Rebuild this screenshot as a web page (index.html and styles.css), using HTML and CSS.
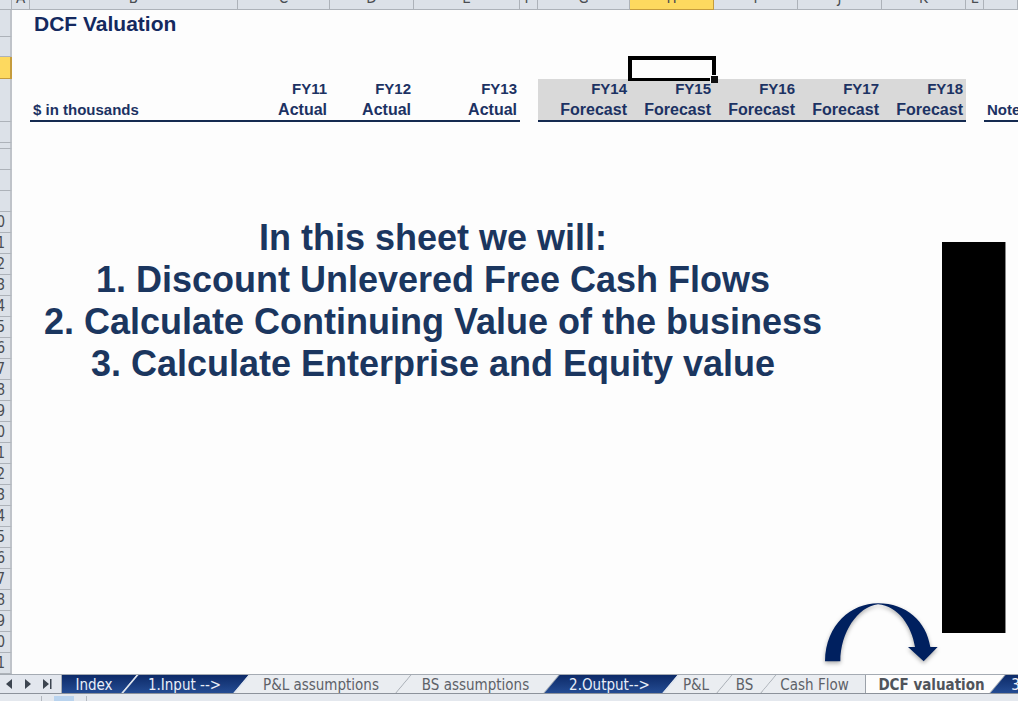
FILE: index.html
```html
<!DOCTYPE html>
<html lang="en">
<head>
<meta charset="utf-8">
<title>DCF Valuation</title>
<link rel="stylesheet" href="styles.css">
</head>
<body>
<div class="app">
<main class="sheet">
<table class="grid">
<colgroup><col class="c-head"><col class="c-thin"><col class="c-label"><col class="c-wide"><col class="c-year"><col class="c-last"><col class="c-thin"><col class="c-wide"><col class="c-year"><col class="c-year"><col class="c-year"><col class="c-year"><col class="c-thin"><col></colgroup>
<thead>
<tr class="letters"><th></th><th><span>A</span></th><th><span>B</span></th><th><span>C</span></th><th><span>D</span></th><th><span>E</span></th><th><span>F</span></th><th><span>G</span></th><th class="picked"><span>H</span></th><th><span>I</span></th><th><span>J</span></th><th><span>K</span></th><th><span>L</span></th><th></th></tr>
</thead>
<tbody>
<tr class="r-title"><th></th><td></td><td colspan="12"><h1>DCF Valuation</h1></td></tr>
<tr class="r-gap"><th></th><td colspan="13"></td></tr>
<tr class="r-active"><th class="picked"></th><td colspan="7"></td><td class="active"><div class="cursor"></div></td><td colspan="5"></td></tr>
<tr class="r-years"><th></th><td></td><td class="line label">$ in thousands</td><td class="line"><b>FY11</b>Actual</td><td class="line"><b>FY12</b>Actual</td><td class="line"><b>FY13</b>Actual</td><td></td><td class="line plan"><b>FY14</b>Forecast</td><td class="line plan"><b>FY15</b>Forecast</td><td class="line plan"><b>FY16</b>Forecast</td><td class="line plan"><b>FY17</b>Forecast</td><td class="line plan"><b>FY18</b>Forecast</td><td></td><td class="line label">Notes</td></tr>
<tr class="row"><th></th><td colspan="13"></td></tr>
<tr class="r-slim"><th></th><td colspan="13"></td></tr>
<tr class="row"><th></th><td colspan="13"></td></tr>
<tr class="row"><th></th><td colspan="13"></td></tr>
<tr class="row"><th></th><td colspan="13"></td></tr>
<tr class="row"><th><span>10</span></th><td colspan="13"></td></tr>
<tr class="row"><th><span>11</span></th><td colspan="13"></td></tr>
<tr class="row"><th><span>12</span></th><td colspan="13"></td></tr>
<tr class="row"><th><span>13</span></th><td colspan="13"></td></tr>
<tr class="row"><th><span>14</span></th><td colspan="13"></td></tr>
<tr class="row"><th><span>15</span></th><td colspan="13"></td></tr>
<tr class="row"><th><span>16</span></th><td colspan="13"></td></tr>
<tr class="row"><th><span>17</span></th><td colspan="13"></td></tr>
<tr class="row"><th><span>18</span></th><td colspan="13"></td></tr>
<tr class="row"><th><span>19</span></th><td colspan="13"></td></tr>
<tr class="row"><th><span>20</span></th><td colspan="13"></td></tr>
<tr class="row"><th><span>21</span></th><td colspan="13"></td></tr>
<tr class="row"><th><span>22</span></th><td colspan="13"></td></tr>
<tr class="row"><th><span>23</span></th><td colspan="13"></td></tr>
<tr class="row"><th><span>24</span></th><td colspan="13"></td></tr>
<tr class="row"><th><span>25</span></th><td colspan="13"></td></tr>
<tr class="row"><th><span>26</span></th><td colspan="13"></td></tr>
<tr class="row"><th><span>27</span></th><td colspan="13"></td></tr>
<tr class="row"><th><span>28</span></th><td colspan="13"></td></tr>
<tr class="row"><th><span>29</span></th><td colspan="13"></td></tr>
<tr class="row"><th><span>30</span></th><td colspan="13"></td></tr>
<tr class="row"><th><span>31</span></th><td colspan="13"></td></tr>
</tbody>
</table>
<div class="note">
<p>In this sheet we will:</p>
<p>1. Discount Unlevered Free Cash Flows</p>
<p>2. Calculate Continuing Value of the business</p>
<p>3. Calculate Enterprise and Equity value</p>
</div>
<div class="block"></div>
<svg class="arrow" viewBox="0 0 351 192" aria-hidden="true"><path d="M6 178C8 66 86 4 165 4C250 4 310 58 322 135H344L302 178L255 135H276C266 72 226 12 165 7C104 14 52 92 52 178Z"/></svg>
</main>
<nav class="tabs" aria-label="Sheets">
<div class="scroll">
<button class="step" aria-label="Previous sheet"><svg viewBox="0 0 10 10"><path d="M8 0V10L2 5Z"/></svg></button>
<button class="step" aria-label="Next sheet"><svg viewBox="0 0 10 10"><path d="M2 0V10L8 5Z"/></svg></button>
<button class="step" aria-label="Last sheet"><svg viewBox="0 0 10 10"><path d="M1 0V10L7 5ZM8 0H9.500V10H8Z"/></svg></button>
</div>
<button class="tab dark t-index"><span>Index</span></button>
<button class="tab dark t-input"><span>1.Input --&gt;</span></button>
<button class="tab t-pla"><span>P&amp;L assumptions</span></button>
<button class="tab t-bsa"><span>BS assumptions</span></button>
<button class="tab dark t-output"><span>2.Output--&gt;</span></button>
<button class="tab t-pl"><span>P&amp;L</span></button>
<button class="tab t-bs"><span>BS</span></button>
<button class="tab t-cash"><span>Cash Flow</span></button>
<button class="tab current t-dcf" aria-current="page"><span>DCF valuation</span></button>
<button class="tab dark t-next"><span>3</span></button>
</nav>
<footer class="status"><i></i><em></em><i></i></footer>
</div>
</body>
</html>
```
FILE: styles.css
```css
* { box-sizing: border-box; }
body {
  margin: 0;
  background: #fdfdfd;
  color: #1b365f;
  font-family: "Liberation Sans", Arial, sans-serif;
}
.app {
  display: flex;
  flex-direction: column;
  min-height: 100vh;
  overflow: hidden;
}
.sheet {
  position: relative;
  flex: 1 0 auto;
  overflow: hidden;
}

/* cell grid */
.grid {
  width: 100%;
  table-layout: fixed;
  border-collapse: separate;
  border-spacing: 0;
}
.c-head { width: 12px; }
.c-thin { width: 18px; }
.c-label { width: 208px; }
.c-wide { width: 92px; }
.c-year { width: 84px; }
.c-last { width: 106px; }
.grid td, .grid th { padding: 0; }
.grid th {
  background: #dce1e8;
  border-right: 1px solid #adb2b9;
  border-bottom: 1px solid #adb2b9;
  color: #4a4d52;
  font: 15px/20px "DejaVu Sans Condensed", "DejaVu Sans", sans-serif;
}
.grid tbody th { border-right-width: 2px; border-right-color: #bfc3c9; }
.grid th.picked {
  background: #fdd95f;
  border-color: #c59c3d;
}
.letters span {
  display: flex;
  align-items: flex-end;
  justify-content: center;
  height: 9px;
  padding-bottom: 1px;
  overflow: hidden;
}
.row span {
  display: flex;
  justify-content: flex-end;
  height: 20px;
  padding-right: 5px;
  overflow: hidden;
}
.letters { height: 10px; }
.r-title { height: 27px; }
.r-gap { height: 20px; }
.r-active { height: 22px; }
.r-years { height: 43px; }
.r-slim { height: 6px; }
.row { height: 21px; }
h1 {
  margin: 0;
  padding-left: 4px;
  color: #14295f;
  font-size: 21px;
  line-height: 26px;
}
.r-years td {
  padding-right: 3px;
  color: #1c3263;
  font-size: 16px;
  font-weight: bold;
  line-height: 21px;
  text-align: right;
  vertical-align: top;
  white-space: nowrap;
}
.r-years b {
  display: block;
  height: 20px;
  font-size: 15px;
  line-height: 20px;
}
.r-years .line { border-bottom: 2px solid #152a50; }
.r-years .label {
  padding-left: 3px;
  font-size: 15px;
  text-align: left;
  vertical-align: bottom;
  overflow: hidden;
}
.r-years .plan { background: #d9d9d9; }
.active { position: relative; }
.cursor {
  position: absolute;
  inset: -1px -2px -2px -2px;
  border: 4px solid #000;
  border-bottom-width: 3px;
}
.cursor::after {
  content: "";
  position: absolute;
  right: -6px;
  bottom: -5px;
  width: 7px;
  height: 7px;
  background: #111;
  border-top: 1px solid #fff;
  border-left: 1px solid #fff;
}

/* drawings lying over the cells */
.note {
  position: absolute;
  top: 217px;
  left: 33px;
  width: 800px;
  color: #1b365f;
  font-size: 36px;
  font-weight: bold;
  line-height: 42px;
  text-align: center;
  white-space: nowrap;
}
.note p { margin: 0; }
.block {
  position: absolute;
  top: 242px;
  left: 942px;
  width: 64px;
  height: 391px;
  background: #000;
  border-right: 1px solid #888;
}
.arrow {
  position: absolute;
  top: 602px;
  left: 823px;
  width: 117px;
  height: 64px;
  fill: #00205f;
  overflow: visible;
  filter: drop-shadow(0 2px 2px #aaa);
}

/* sheet tabs */
.tabs {
  display: flex;
  height: 20px;
  overflow: hidden;
  background: #e3e7ee;
  border-top: 1px solid #a5abb3;
  border-bottom: 1px solid #8c929b;
}
.scroll {
  position: relative;
  z-index: 1;
  display: flex;
  flex: none;
  gap: 9px;
  width: 62px;
  padding-left: 4px;
  background: #e3e7ee;
  border-right: 1px solid #a5abb3;
}
.step {
  display: flex;
  align-items: center;
  width: 10px;
  padding: 0;
  border: 0;
  background: none;
}
.step svg { width: 10px; height: 10px; fill: #3d4550; }
.tab {
  position: relative;
  z-index: 0;
  flex: none;
  padding: 1px 5px 0 0;
  border: 0;
  background: none;
  color: #5d6168;
  font: 15px/18px "DejaVu Sans Condensed", "DejaVu Sans", sans-serif;
  white-space: nowrap;
}
.tab::before {
  content: "";
  position: absolute;
  z-index: -1;
  inset: 0;
  background: #eaedf1;
  border-right: 1px solid #9ba1a9;
  transform: skewX(-40deg);
}
.dark { color: #e9eef8; }
.dark::before {
  background: linear-gradient(#0d2a68, #244c93);
  border-right: 2px solid #dfe5ee;
}
.t-index { width: 69px; }
.t-index::before { left: -9px; }
.t-input { width: 112px; }
.t-pla { width: 161px; }
.t-bsa { width: 148px; }
.t-output { width: 120px; }
.t-pl { width: 53px; }
.t-bs { width: 44px; }
.t-cash { width: 96px; }
.t-cash::before { right: -12px; }
.t-dcf { width: 133px; padding-right: 0; }
.t-next { width: 40px; }

/* the open sheet's tab has a straight left edge */
.current { color: #50545b; font-weight: bold; }
.current::before { left: 12px; background: #fdfdfd; }
.current::after {
  content: "";
  position: absolute;
  z-index: -1;
  top: 0;
  bottom: 0;
  left: 0;
  width: 24px;
  background: #fdfdfd;
  border-left: 1px solid #9ba1a9;
}

/* strip under the tabs */
.status {
  display: flex;
  gap: 12px;
  height: 7px;
  padding: 2px 0 0 41px;
  background: #e4e8ee;
}
.status i { width: 1px; background: #b3b8bf; }
.status em { width: 20px; background: #b9d3ee; }
```
